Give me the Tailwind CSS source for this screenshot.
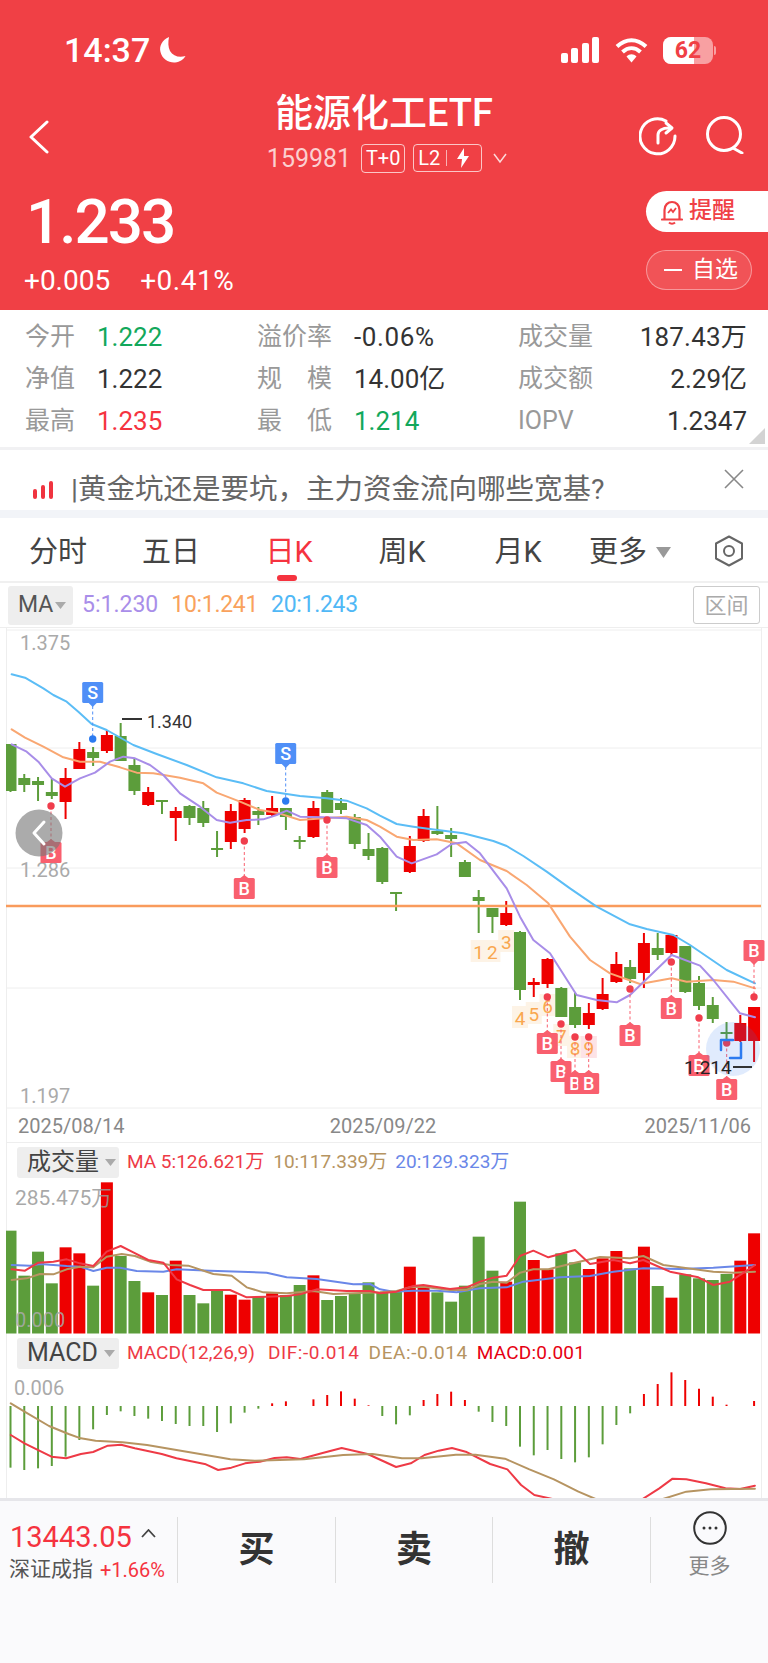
<!DOCTYPE html>
<html lang="zh-CN">
<head>
  <meta charset="UTF-8" />
  <meta name="viewport" content="width=device-width, initial-scale=1.0"/>
  <title>能源化工ETF</title>
  <script src="https://cdn.jsdelivr.net/npm/@tailwindcss/browser@4"></script>
</head>
<body class="bg-white text-[#333] font-['Roboto','Noto_Sans_CJK_SC',sans-serif] overflow-hidden">
<div class="w-[768px] h-[1663px] flex flex-col overflow-hidden">

  <!-- HEADER -->
  <header class="h-[310px] shrink-0 bg-[#f04045] text-white flex flex-col">
    <!-- status bar -->
    <div class="h-[88px] pt-[12px] pl-[64px] pr-[52px] flex items-center justify-between">
      <div class="flex items-center gap-[9px]">
        <span class="text-[34px] font-medium leading-none">14:37</span>
        <svg width="28" height="28" viewBox="0 0 28 28"><path d="M10 1C3 4 0 10 1.500 16C3 23 10 27 16 26.500C21 26 25 23 26.500 20C20 22 14 20 11 15C9 11 9 6 10 1Z" fill="#fff"/></svg>
      </div>
      <div class="flex items-center gap-[15px]">
        <svg width="39" height="26" viewBox="0 0 39 26"><rect x="0" y="16" width="7" height="10" rx="2" fill="#fff"/><rect x="10" y="11" width="7" height="15" rx="2" fill="#fff"/><rect x="21" y="6" width="7" height="20" rx="2" fill="#fff"/><rect x="31" y="0" width="7" height="26" rx="2" fill="#fff"/></svg>
        <svg width="33" height="26" viewBox="0 0 33 26"><path d="M2 9.500C11 1 22 1 31 9.500" fill="none" stroke="#fff" stroke-width="4"/><path d="M7.500 15C13 10 20 10 25.500 15" fill="none" stroke="#fff" stroke-width="4"/><path d="M11.500 19.500L16.500 25.500L21.500 19.500C18.500 16.500 14.500 16.500 11.500 19.500Z" fill="#fff"/></svg>
        <div class="flex items-center gap-[1px]">
          <div class="relative w-[50px] h-[27px] rounded-[8px] overflow-hidden bg-white/50 flex items-center justify-center">
            <div class="absolute left-0 top-0 bottom-0 w-[31px] bg-white"></div>
            <span class="relative text-[#f04045] text-[23px] font-bold leading-none">62</span>
          </div>
          <div class="w-[2px] h-[9px] rounded-r bg-white/50"></div>
        </div>
      </div>
    </div>
    <!-- nav -->
    <div class="h-[90px] grid grid-cols-[160px_1fr_160px]">
      <div class="pl-[28px] pt-[32px]">
        <svg width="22" height="34" viewBox="0 0 22 34"><path d="M19 2L3 17L19 32" fill="none" stroke="#fff" stroke-width="3" stroke-linecap="round" stroke-linejoin="round"/></svg>
      </div>
      <div class="flex flex-col items-center">
        <div class="text-[38px] font-medium leading-[40px] mt-[5px] whitespace-nowrap">能源化工ETF</div>
        <div class="flex items-center mt-[10px] h-[30px] ml-[7px] whitespace-nowrap">
          <span class="text-[25px] leading-none text-white/75">159981</span>
          <span class="ml-[10px] w-[44px] h-[29px] border border-white/70 rounded-[4px] text-[20px] leading-none flex items-center justify-center">T+0</span>
          <span class="ml-[8px] w-[69px] h-[28px] border border-white/70 rounded-[4px] text-[20px] leading-none flex items-center pl-[4px]">
            L2
            <span class="ml-[6px] h-[16px] w-px bg-white/60"></span>
            <svg class="ml-[9px]" width="14" height="20" viewBox="0 0 14 20"><path d="M8 0L1 11H6L5 20L13 8H8Z" fill="#fff"/></svg>
          </span>
          <svg class="ml-[10px]" width="16" height="11" viewBox="0 0 16 11"><path d="M2 1L8 9L14 1" fill="none" stroke="#fff" stroke-opacity=".8" stroke-width="1.500"/></svg>
        </div>
      </div>
      <div class="flex items-start pt-[28px] pl-[31px] gap-[29px]">
        <svg width="38" height="40" viewBox="0 0 38 40">
          <path d="M27 5A17.500 17.500 0 1 0 36 20" fill="none" stroke="#fff" stroke-width="3" stroke-linecap="round"/>
          <path d="M19 27V19C19 15 23 12 30 12" fill="none" stroke="#fff" stroke-width="3" stroke-linecap="round"/>
          <path d="M27 7L33 12L27 17" fill="none" stroke="#fff" stroke-width="3" stroke-linecap="round" stroke-linejoin="round"/>
        </svg>
        <svg width="38" height="38" viewBox="0 0 38 38">
          <circle cx="18" cy="18" r="16.500" fill="none" stroke="#fff" stroke-width="3"/>
          <path d="M27 32L36 37" fill="none" stroke="#fff" stroke-width="3" stroke-linecap="round"/>
        </svg>
      </div>
    </div>
    <!-- price -->
    <div class="flex-1 flex justify-between">
      <div class="pl-[26px]">
        <div class="text-[62px] font-medium leading-[62px] mt-[13px] tracking-[-2px]">1.233</div>
        <div class="flex text-[28px] leading-[32px] mt-[12px] -ml-[2px] gap-[30px]">
          <span>+0.005</span><span class="tracking-[.5px]">+0.41%</span>
        </div>
      </div>
      <div class="flex flex-col items-end">
        <div class="mt-[13px] w-[122px] h-[41px] bg-white rounded-l-[21px] flex items-center pl-[15px] text-[#f04045] text-[23px] font-medium">
          <svg width="22" height="26" viewBox="0 0 22 26">
            <path d="M3.500 20V11C3.500 6 7 3 11 3C15 3 18.500 6 18.500 11V20M1 20.500H21" fill="none" stroke="#f04045" stroke-width="2.200" stroke-linecap="round"/>
            <path d="M8 23.500C9.500 25 12.500 25 14 23.500" fill="none" stroke="#f04045" stroke-width="2"/>
            <path d="M7 14L10 10.500L12 13L15 9" fill="none" stroke="#f04045" stroke-width="1.800"/>
          </svg>
          <span class="ml-[6px]">提醒</span>
        </div>
        <div class="mt-[18px] mr-[16px] w-[106px] h-[40px] bg-white/10 border border-white/40 rounded-[20px] flex items-center pl-[17px] text-[23px]">
          <span class="w-[18px] h-[2px] bg-white"></span>
          <span class="ml-[10px]">自选</span>
        </div>
      </div>
    </div>
  </header>

  <!-- QUOTE STATS -->
  <section class="relative h-[140px] shrink-0 border-b-[3px] border-[#f1f1f3] pt-[6px] pl-[25px] pr-[21px] text-[26px] grid grid-cols-[232px_261px_1fr] grid-rows-[42px_42px_42px] items-center">
    <div class="flex items-center"><span class="w-[72px] text-[25px] text-[#999]">今开</span><span class="text-[#12a85b]">1.222</span></div>
    <div class="flex items-center"><span class="w-[97px] text-[25px] text-[#999]">溢价率</span><span class="tracking-[.6px]">-0.06%</span></div>
    <div class="flex items-center justify-between"><span class="text-[25px] text-[#999]">成交量</span><span class="tracking-[.2px]">187.43万</span></div>

    <div class="flex items-center"><span class="w-[72px] text-[25px] text-[#999]">净值</span><span>1.222</span></div>
    <div class="flex items-center"><span class="w-[75px] mr-[22px] text-[25px] text-[#999] flex justify-between"><i class="not-italic">规</i><i class="not-italic">模</i></span><span>14.00亿</span></div>
    <div class="flex items-center justify-between"><span class="text-[25px] text-[#999]">成交额</span><span>2.29亿</span></div>

    <div class="flex items-center"><span class="w-[72px] text-[25px] text-[#999]">最高</span><span class="text-[#f5333f]">1.235</span></div>
    <div class="flex items-center"><span class="w-[75px] mr-[22px] text-[25px] text-[#999] flex justify-between"><i class="not-italic">最</i><i class="not-italic">低</i></span><span class="text-[#12a85b]">1.214</span></div>
    <div class="flex items-center justify-between"><span class="text-[25px] text-[#999]">IOPV</span><span>1.2347</span></div>

    <svg class="absolute right-[3px] bottom-[3px]" width="16" height="16" viewBox="0 0 16 16"><path d="M16 0V16H0Z" fill="#d3d3d3"/></svg>
  </section>

  <!-- NEWS -->
  <section class="h-[60px] shrink-0 border-b-[8px] border-[#f2f4f8] flex items-center relative pl-[33px] box-content">
    <svg class="mt-[20px]" width="22" height="18" viewBox="0 0 22 18"><rect x="0" y="8" width="4" height="10" rx="2" fill="#f0333f"/><rect x="8" y="4" width="4" height="14" rx="2" fill="#f0333f"/><rect x="16" y="0" width="4" height="18" rx="2" fill="#f0333f"/></svg>
    <span class="ml-[16px] mt-[20px] text-[28.5px] text-[#666] leading-[36px] whitespace-nowrap">|黄金坑还是要坑&#65292;主力资金流向哪些宽基?</span>
    <svg class="absolute right-[23px] top-[19px]" width="22" height="20" viewBox="0 0 22 20"><path d="M2 1L20 19M20 1L2 19" fill="none" stroke="#888" stroke-width="1.600"/></svg>
  </section>

  <!-- PERIOD TABS -->
  <nav class="h-[65px] shrink-0 border-b-2 border-[#f0f0f0] grid grid-cols-[116px_110px_126px_100px_132px_90px_94px] items-center text-[29px] text-[#444] text-center pt-[6px]">
    <span>分时</span>
    <span>五日</span>
    <span class="relative h-full flex items-center justify-center text-[#f5333f]">日K
      <span class="absolute bottom-0 left-[51px] w-[20px] h-[6px] rounded-full bg-[#f5333f]"></span>
    </span>
    <span>周K</span>
    <span>月K</span>
    <span class="flex items-center pl-[5px] gap-[9px] whitespace-nowrap">更多
      <svg width="15" height="11" viewBox="0 0 15 11"><path d="M0 0H15L7.500 11Z" fill="#999"/></svg>
    </span>
    <span class="flex justify-start pl-[40px] -mt-[3px]">
      <svg width="30" height="32" viewBox="0 0 30 32"><path d="M15 1.500L28 8.500V23.500L15 30.500L2 23.500V8.500Z" fill="none" stroke="#666" stroke-width="2" stroke-linejoin="round"/><circle cx="15" cy="16" r="5" fill="none" stroke="#666" stroke-width="2"/></svg>
    </span>
  </nav>

  <!-- MA LEGEND -->
  <div class="h-[45px] shrink-0 flex items-center pl-[8px] pr-[8px] text-[23px] border-b border-[#eee]">
    <div class="w-[65px] h-[39px] rounded-[3px] bg-[#eeeeee] flex items-center pl-[10px] gap-[2px] text-[#555]">
      MA<svg width="11" height="7" viewBox="0 0 11 7"><path d="M0 0H11L5.500 7Z" fill="#aaa"/></svg>
    </div>
    <span class="ml-[9px] text-[#a98ee9]">5:1.230</span>
    <span class="ml-[13px] text-[#f9a25d] tracking-[-.3px]">10:1.241</span>
    <span class="ml-[13px] text-[#50b8f6] tracking-[-.3px]">20:1.243</span>
    <span class="ml-auto w-[67px] h-[38px] rounded-[3px] border border-[#ccc] text-[#aaa] text-[22px] flex items-center justify-center">区间</span>
  </div>

  <!-- CANDLE CHART -->
  <svg id="kline" class="block shrink-0" width="768" height="482" viewBox="0 628 768 482" font-family="Roboto, sans-serif"></svg>
  <div class="h-[33px] shrink-0 mx-[6px] px-[11px] border-x border-b border-[#eee] flex items-center justify-between text-[20px] text-[#888]">
    <span>2025/08/14</span><span class="-ml-[3px]">2025/09/22</span><span class="-mr-[1px]">2025/11/06</span>
  </div>

  <!-- VOLUME -->
  <div class="h-[38px] shrink-0 mx-[6px] border-x border-[#eee] flex items-center pl-[10px] text-[19px] whitespace-nowrap">
    <div class="w-[102px] h-[31px] rounded-[3px] bg-[#eeeeee] flex items-center pl-[10px] gap-[6px] text-[24px] text-[#444]">
      成交量<svg width="11" height="7" viewBox="0 0 11 7"><path d="M0 0H11L5.500 7Z" fill="#aaa"/></svg>
    </div>
    <span class="ml-[8px] text-[#ee3a46]">MA 5:126.621万</span>
    <span class="ml-[9px] text-[#b69461]">10:117.339万</span>
    <span class="ml-[8px] text-[#6a87e8]">20:129.323万</span>
  </div>
  <svg id="volume" class="block shrink-0" width="768" height="154" viewBox="0 1181 768 154" font-family="Roboto, sans-serif"></svg>

  <!-- MACD -->
  <div class="h-[36px] shrink-0 mx-[6px] border-x border-[#eee] flex items-center pl-[10px] text-[19px] whitespace-nowrap">
    <div class="w-[102px] h-[31px] rounded-[3px] bg-[#eeeeee] flex items-center pl-[10px] gap-[6px] text-[25px] text-[#444]">
      MACD<svg width="11" height="7" viewBox="0 0 11 7"><path d="M0 0H11L5.500 7Z" fill="#aaa"/></svg>
    </div>
    <span class="ml-[8px] text-[#ee3a46]">MACD(12,26,9)</span>
    <span class="ml-[13px] text-[#ee3a46] tracking-[.6px]">DIF:-0.014</span>
    <span class="ml-[9px] text-[#b69461] tracking-[.6px]">DEA:-0.014</span>
    <span class="ml-[9px] text-[#e60012] tracking-[.2px]">MACD:0.001</span>
  </div>
  <svg id="macd" class="block shrink-0" width="768" height="127" viewBox="0 1371 768 127" font-family="Roboto, sans-serif"></svg>

  <!-- BOTTOM BAR -->
  <footer class="flex-1 bg-[#fafafc] border-t-[3px] border-[#e6e6ea] pt-[16px]">
    <div class="h-[59px] grid grid-cols-[177px_158px_157px_158px_118px] items-stretch">
      <div class="pl-[10px] whitespace-nowrap">
        <div class="flex items-center h-[40px] text-[29px] leading-none text-[#f5333f]">
          13443.05
          <svg class="ml-[9px] -mt-[8px]" width="15" height="9" viewBox="0 0 15 9"><path d="M1 8L7.500 1L14 8" fill="none" stroke="#444" stroke-width="1.800"/></svg>
        </div>
        <div class="flex items-center h-[26px] -ml-[1px] text-[21px] text-[#555]">深证成指<span class="ml-[7px] text-[20px] text-[#f5333f]">+1.66%</span></div>
      </div>
      <div class="border-l border-[#ddd] flex items-center justify-center text-[36px] font-bold text-[#333]">买</div>
      <div class="border-l border-[#ddd] flex items-center justify-center text-[36px] font-bold text-[#333]">卖</div>
      <div class="border-l border-[#ddd] flex items-center justify-center text-[36px] font-bold text-[#333]">撤</div>
      <div class="border-l border-[#ddd] flex flex-col items-center">
        <svg class="-mt-[6px]" width="34" height="34" viewBox="0 0 34 34"><circle cx="17" cy="17" r="15.800" fill="none" stroke="#333" stroke-width="2"/><circle cx="11" cy="17" r="1.500" fill="#333"/><circle cx="17" cy="17" r="1.500" fill="#333"/><circle cx="23" cy="17" r="1.500" fill="#333"/></svg>
        <span class="mt-[7px] text-[21px] leading-[28px] text-[#888]">更多</span>
      </div>
    </div>
  </footer>
</div>

<script>
  const RED = '#ee0000', GREEN = '#5c9d3b';
  const xAt = i => 10.5 + 13.77 * i;
  const poly = (pts, color, w) => `<polyline points="${pts.map(p => p.join(',')).join(' ')}" fill="none" stroke="${color}" stroke-width="${w}" stroke-linejoin="round" stroke-linecap="round"/>`;
  const line = (x1, y1, x2, y2, color, w, extra = '') => `<line x1="${x1}" y1="${y1}" x2="${x2}" y2="${y2}" stroke="${color}" stroke-width="${w}" ${extra}/>`;
  // points read off two crops of the chart
  const left = p => p.map(([x, y]) => [x / 3, 630 + y / 3]);
  const right = p => p.map(([x, y]) => [380 + x / 3, 780 + y / 3]);

  // wickTop, bodyTop, bodyBottom, wickBottom, up?
  const candles = [
    [744,744,791,792,0],[774,778,785,792,0],[777,781,785,801,0],[779,792,796,799,0],[768,778,802,819,1],
    [742,749,769,769,1],[747,752,758,766,0],[730,735,751,753,1],[723,736,761,761,0],[759,765,791,795,0],
    [787,792,805,806,1],[800,800,802,814,0],[807,811,818,841,1],[805,806,818,825,0],[801,808,823,827,0],
    [831,848,850,857,0],[804,811,842,849,1],[798,800,829,833,1],[807,811,815,825,0],[796,808,815,816,1],
    [808,808,817,830,0],[836,840,842,849,0],[801,808,837,838,1],[790,792,813,813,0],[798,803,810,814,0],
    [814,817,844,849,0],[833,849,856,860,0],[847,848,882,884,0],[892,892,894,911,0],[836,846,872,873,1],
    [809,816,841,842,1],[806,831,834,835,0],[828,835,839,857,0],[860,862,877,877,0],[890,897,901,933,0],
    [908,908,917,933,0],[901,913,925,926,1],[931,932,990,1000,0],[978,982,985,997,1],[958,959,984,988,1],
    [987,988,1017,1017,0],[993,1007,1025,1028,0],[1003,1013,1025,1029,1],[978,994,1009,1010,1],[952,964,982,983,1],
    [960,967,979,983,0],[933,943,973,988,1],[933,948,955,960,0],[935,935,953,955,1],[946,946,992,993,0],
    [976,983,1006,1010,0],[997,1005,1019,1023,0],[1022,1032,1034,1042,0],[1015,1023,1041,1042,1],[1007,1007,1041,1062,1],
  ];

  const ma20 = [...left([[35,133],[75,143],[130,175],[160,195],[200,215],[235,245],[275,282],[320,300],[400,345],[470,372],[560,405],[650,442],[730,460],[800,483],[900,498],[980,505],[1040,512],[1100,535]]),
    ...right([[0,107],[50,132],[100,140],[150,147],[250,160],[340,183],[380,198],[430,228],[500,275],[570,325],[650,380],[750,433],[800,447],[880,465],[930,495],[1040,570],[1125,610]])];
  const ma10 = [...left([[35,298],[75,323],[130,350],[190,382],[240,395],[300,395],[360,412],[410,428],[460,430],[540,443],[610,460],[650,488],[720,515],[780,540],[830,548],[900,570],[970,565],[1040,560],[1100,570]]),
    ...right([[0,140],[50,170],[100,180],[170,178],[230,190],[300,240],[380,273],[440,315],[505,370],[570,470],[630,540],[690,580],[780,612],[875,595],[920,605],[1000,600],[1060,605],[1125,625]])];
  const ma5 = [...left([[35,343],[80,365],[115,395],[155,445],[195,470],[240,445],[285,428],[330,395],[370,380],[405,385],[450,405],[490,435],[540,490],[600,530],[650,570],[690,578],[740,570],[790,568],[830,555],[860,542],[900,560],[970,562],[1040,565],[1100,585]]),
    ...right([[0,170],[50,230],[95,250],[170,223],[215,192],[258,186],[300,220],[380,325],[420,410],[460,480],[510,520],[590,645],[650,660],[710,667],[750,645],[875,525],[960,557],[1000,600],[1080,700],[1125,712]])];

  // flip: the flag's tip points down, towards a dot below it
  function badge(x, top, dotY, label, color, dotColor, flip) {
    let s = line(x, flip ? top + 24 : dotY, x, flip ? dotY : top, color, 1, 'stroke-dasharray="3 2.5"');
    s += `<circle cx="${x}" cy="${dotY}" r="3.700" fill="${dotColor}"/>`;
    const tip = flip ? `${x - 4},${top + 21} ${x + 4},${top + 21} ${x},${top + 25}` : `${x - 4},${top} ${x + 4},${top} ${x},${top - 3}`;
    s += `<polygon points="${tip}" fill="${color}"/>`;
    s += `<rect x="${x - 10.5}" y="${top}" width="21" height="21" rx="1.500" fill="${color}"/>`;
    s += `<text x="${x}" y="${top + 17}" text-anchor="middle" font-size="18" font-weight="500" fill="#fff">${label}</text>`;
    return s;
  }

  function td(x, y, n, bg) {
    return `<rect x="${x - 8}" y="${y - 13}" width="16" height="22" fill="${bg}"/><text x="${x}" y="${y + 6}" text-anchor="middle" font-size="19" fill="#f9a74f">${n}</text>`;
  }

  // main chart
  let k = '';
  [630, 748, 868, 988, 1108].forEach(y => k += line(6, y, 761, y, '#eeeeee', 1));
  k += line(6.500, 628, 6.500, 1110, '#eeeeee', 1) + line(761.500, 628, 761.500, 1110, '#eeeeee', 1);
  const tdNums = [[34,953,1],[35,953,2],[36,943,3],[37,1019,4],[38,1015,5],[39,1007,6],[40,1037,7],[41,1049,8],[42,1049,9]];
  tdNums.forEach(([i, y, n]) => k += td(xAt(i), y, n, n === 9 ? '#fde3e6' : '#fdf3e6'));
  candles.forEach(([wt, bt, bb, wb, up], i) => {
    const x = xAt(i), c = up ? RED : GREEN;
    const xl = Math.max(x - 6, 6), h = Math.max(bb - bt, 2);
    k += line(x, wt, x, wb, c, 2) + `<rect x="${xl}" y="${bt}" width="${x + 6 - xl}" height="${h}" fill="${c}"/>`;
  });
  k += line(6, 906, 761, 906, '#f99b5c', 2.500);
  k += poly(ma20, '#5bbdf6', 2) + poly(ma10, '#f9a772', 2) + poly(ma5, '#a88de8', 2);
  k += `<text x="20" y="650" font-size="20" fill="#aaa">1.375</text><text x="20" y="877" font-size="20" fill="#aaa">1.286</text><text x="20" y="1103" font-size="20" fill="#aaa">1.197</text>`;
  k += badge(92.700, 682, 739, 'S', '#4f8ff7', '#2c7bf0', true) + badge(285.700, 743, 801, 'S', '#4f8ff7', '#2c7bf0', true);
  [[51,842,806],[244.300,878,841],[327,857,820],[547.300,1033,997],[561,1061,1024],[575,1073,1037],[588.700,1073,1037],[630,1025,989],[671.300,998,962],[699,1055,1018],[726.700,1079,1043]]
    .forEach(([x, top, dot]) => k += badge(x, top, dot, 'B', '#f95f6e', '#f03d4c'));
  k += badge(754, 940, 997, 'B', '#f95f6e', '#f03d4c', true);
  k += line(122, 719, 142, 719, '#333', 2) + `<text x="147" y="728" font-size="18" fill="#333">1.340</text>`;
  // last-day highlight
  k += `<circle cx="733" cy="1049" r="27" fill="#2c7bf0" fill-opacity=".15"/>`;
  k += poly([[721,1050],[721,1040],[733,1040]], '#2c7bf0', 2.500) + poly([[741,1043],[741,1058],[730,1058]], '#2c7bf0', 2.500);
  k += `<text x="684" y="1074" font-size="19" fill="#222">1.214</text>` + line(733, 1067, 752, 1067, '#333', 2);
  k += `<circle cx="39" cy="833" r="23.500" fill="#777" fill-opacity=".62"/>` + poly([[44,822],[34,833],[44,844]], '#fff', 3);
  document.getElementById('kline').innerHTML = k;

  // volume
  const vols = [
    [302,0],[437,0],[365,0],[460,0],[352,1],[370,1],[467,0],[157,1],[378,0],[453,0],[487,1],[495,0],[392,1],[495,0],[520,0],
    [482,0],[494,1],[509,1],[500,0],[490,1],[495,0],[465,0],[436,1],[510,0],[498,0],[490,0],[457,0],[487,0],[483,0],[410,1],
    [465,1],[487,0],[515,0],[467,0],[320,0],[422,0],[455,1],[215,0],[390,1],[418,1],[370,0],[397,0],[417,1],[385,1],[363,1],
    [415,0],[350,1],[468,0],[503,1],[433,0],[445,0],[450,0],[432,0],[392,1],[310,1],
  ];
  const volL = p => p.map(([x, y]) => [x / 3, 1130 + y / 3]);
  const volR = p => p.map(([x, y]) => [380 + x / 3, 1130 + y / 3]);
  const v5 = [...volL([[35,418],[75,422],[115,398],[160,395],[200,388],[240,400],[280,408],[320,365],[362,348],[400,367],[445,390],[490,398],[530,448],[570,465],[610,480],[690,480],[740,502],[800,500],[860,498],[900,493],[950,478],[1040,483],[1110,483]]),
    ...volR([[0,490],[50,485],[100,468],[130,465],[210,477],[260,472],[300,455],[340,443],[380,437],[420,378],[460,362],[505,382],[585,360],[630,402],[700,390],[750,400],[790,390],[870,425],[955,442],[1000,465],[1050,455],[1125,405]])];
  const v10 = [...volL([[35,450],[80,445],[120,432],[160,433],[200,418],[240,410],[280,412],[320,380],[365,372],[405,378],[450,395],[510,405],[565,407],[640,432],[695,437],[740,472],[790,487],[860,490],[940,483],[1000,492],[1100,488]]),
    ...volR([[0,487],[50,483],[90,472],[130,470],[210,480],[260,480],[300,462],[340,455],[380,458],[420,428],[460,418],[505,418],[585,398],[660,381],[750,385],[790,378],[850,405],[900,412],[1000,425],[1060,428],[1125,425]])];
  const v20 = [...volL([[35,405],[90,407],[120,402],[200,408],[240,410],[280,423],[320,413],[360,413],[410,423],[490,425],[530,418],[630,422],[800,428],[860,442],[950,447],[1060,463],[1110,462]]),
    ...volR([[0,478],[40,485],[100,482],[170,482],[230,487],[300,475],[380,472],[430,455],[540,442],[630,438],[700,425],[790,415],[900,417],[1000,413],[1125,405]])];
  let v = line(6.500, 1181, 6.500, 1335, '#eeeeee', 1) + line(761.500, 1181, 761.500, 1335, '#eeeeee', 1);
  vols.forEach(([t, up], i) => {
    const x = xAt(i), xl = Math.max(x - 6, 6), top = 1130 + t / 3;
    v += `<rect x="${xl}" y="${top}" width="${x + 6 - xl}" height="${1333.500 - top}" fill="${up ? RED : GREEN}"/>`;
  });
  v += poly(v20, '#6a87e8', 2) + poly(v10, '#b69461', 2) + poly(v5, '#ee3a46', 2);
  v += `<text x="15" y="1205" font-size="21" fill="#999" fill-opacity=".85">285.475万</text><text x="15" y="1327" font-size="20" fill="#aaa" fill-opacity=".85">0.000</text>`;
  document.getElementById('volume').innerHTML = v;

  // macd, bar value is the crop's y, zero sits at 198
  const hist = [383,390,385,378,350,300,268,225,214,228,236,243,252,258,258,276,250,218,206,190,184,198,178,165,154,176,196,228,253,226,180,162,155,180,215,246,258,320,346,330,357,367,352,313,255,220,162,132,97,120,146,170,194,198,183];
  const macdP = p => p.map(([x, y]) => [x / 2.04, 1340 + y / 3]);
  const dea = macdP([[22,190],[50,215],[100,258],[140,282],[165,295],[195,302],[250,307],[300,315],[360,330],[420,345],[470,358],[520,362],[620,358],[700,345],[760,342],[820,355],[860,355],[930,344],[970,344],[1030,356],[1080,388],[1130,418],[1180,455],[1220,480],[1310,500],[1350,478],[1400,455],[1450,448],[1540,446]]);
  const dif = macdP([[22,285],[50,310],[105,350],[135,355],[165,342],[190,336],[220,317],[247,314],[275,325],[330,342],[360,355],[420,373],[445,390],[472,383],[500,370],[530,365],[560,354],[585,352],[613,357],[660,338],[697,324],[750,342],[808,381],[838,370],[866,345],[895,332],[922,324],[950,335],[1000,372],[1035,388],[1063,435],[1090,465],[1130,478],[1200,500],[1310,478],[1345,445],[1372,416],[1400,418],[1440,430],[1480,445],[1510,447],[1540,437]]);
  let m = line(6.500, 1371, 6.500, 1498, '#eeeeee', 1) + line(761.500, 1371, 761.500, 1498, '#eeeeee', 1);
  hist.forEach((h, i) => {
    if (h === 198) return;
    m += line(xAt(i), 1406, xAt(i), 1340 + h / 3, h > 198 ? GREEN : RED, 2);
  });
  m += poly(dif, '#ee3a46', 2) + poly(dea, '#b69461', 2);
  m += `<text x="14" y="1395" font-size="20" fill="#aaa">0.006</text>`;
  document.getElementById('macd').innerHTML = m;
</script>
</body>
</html>
